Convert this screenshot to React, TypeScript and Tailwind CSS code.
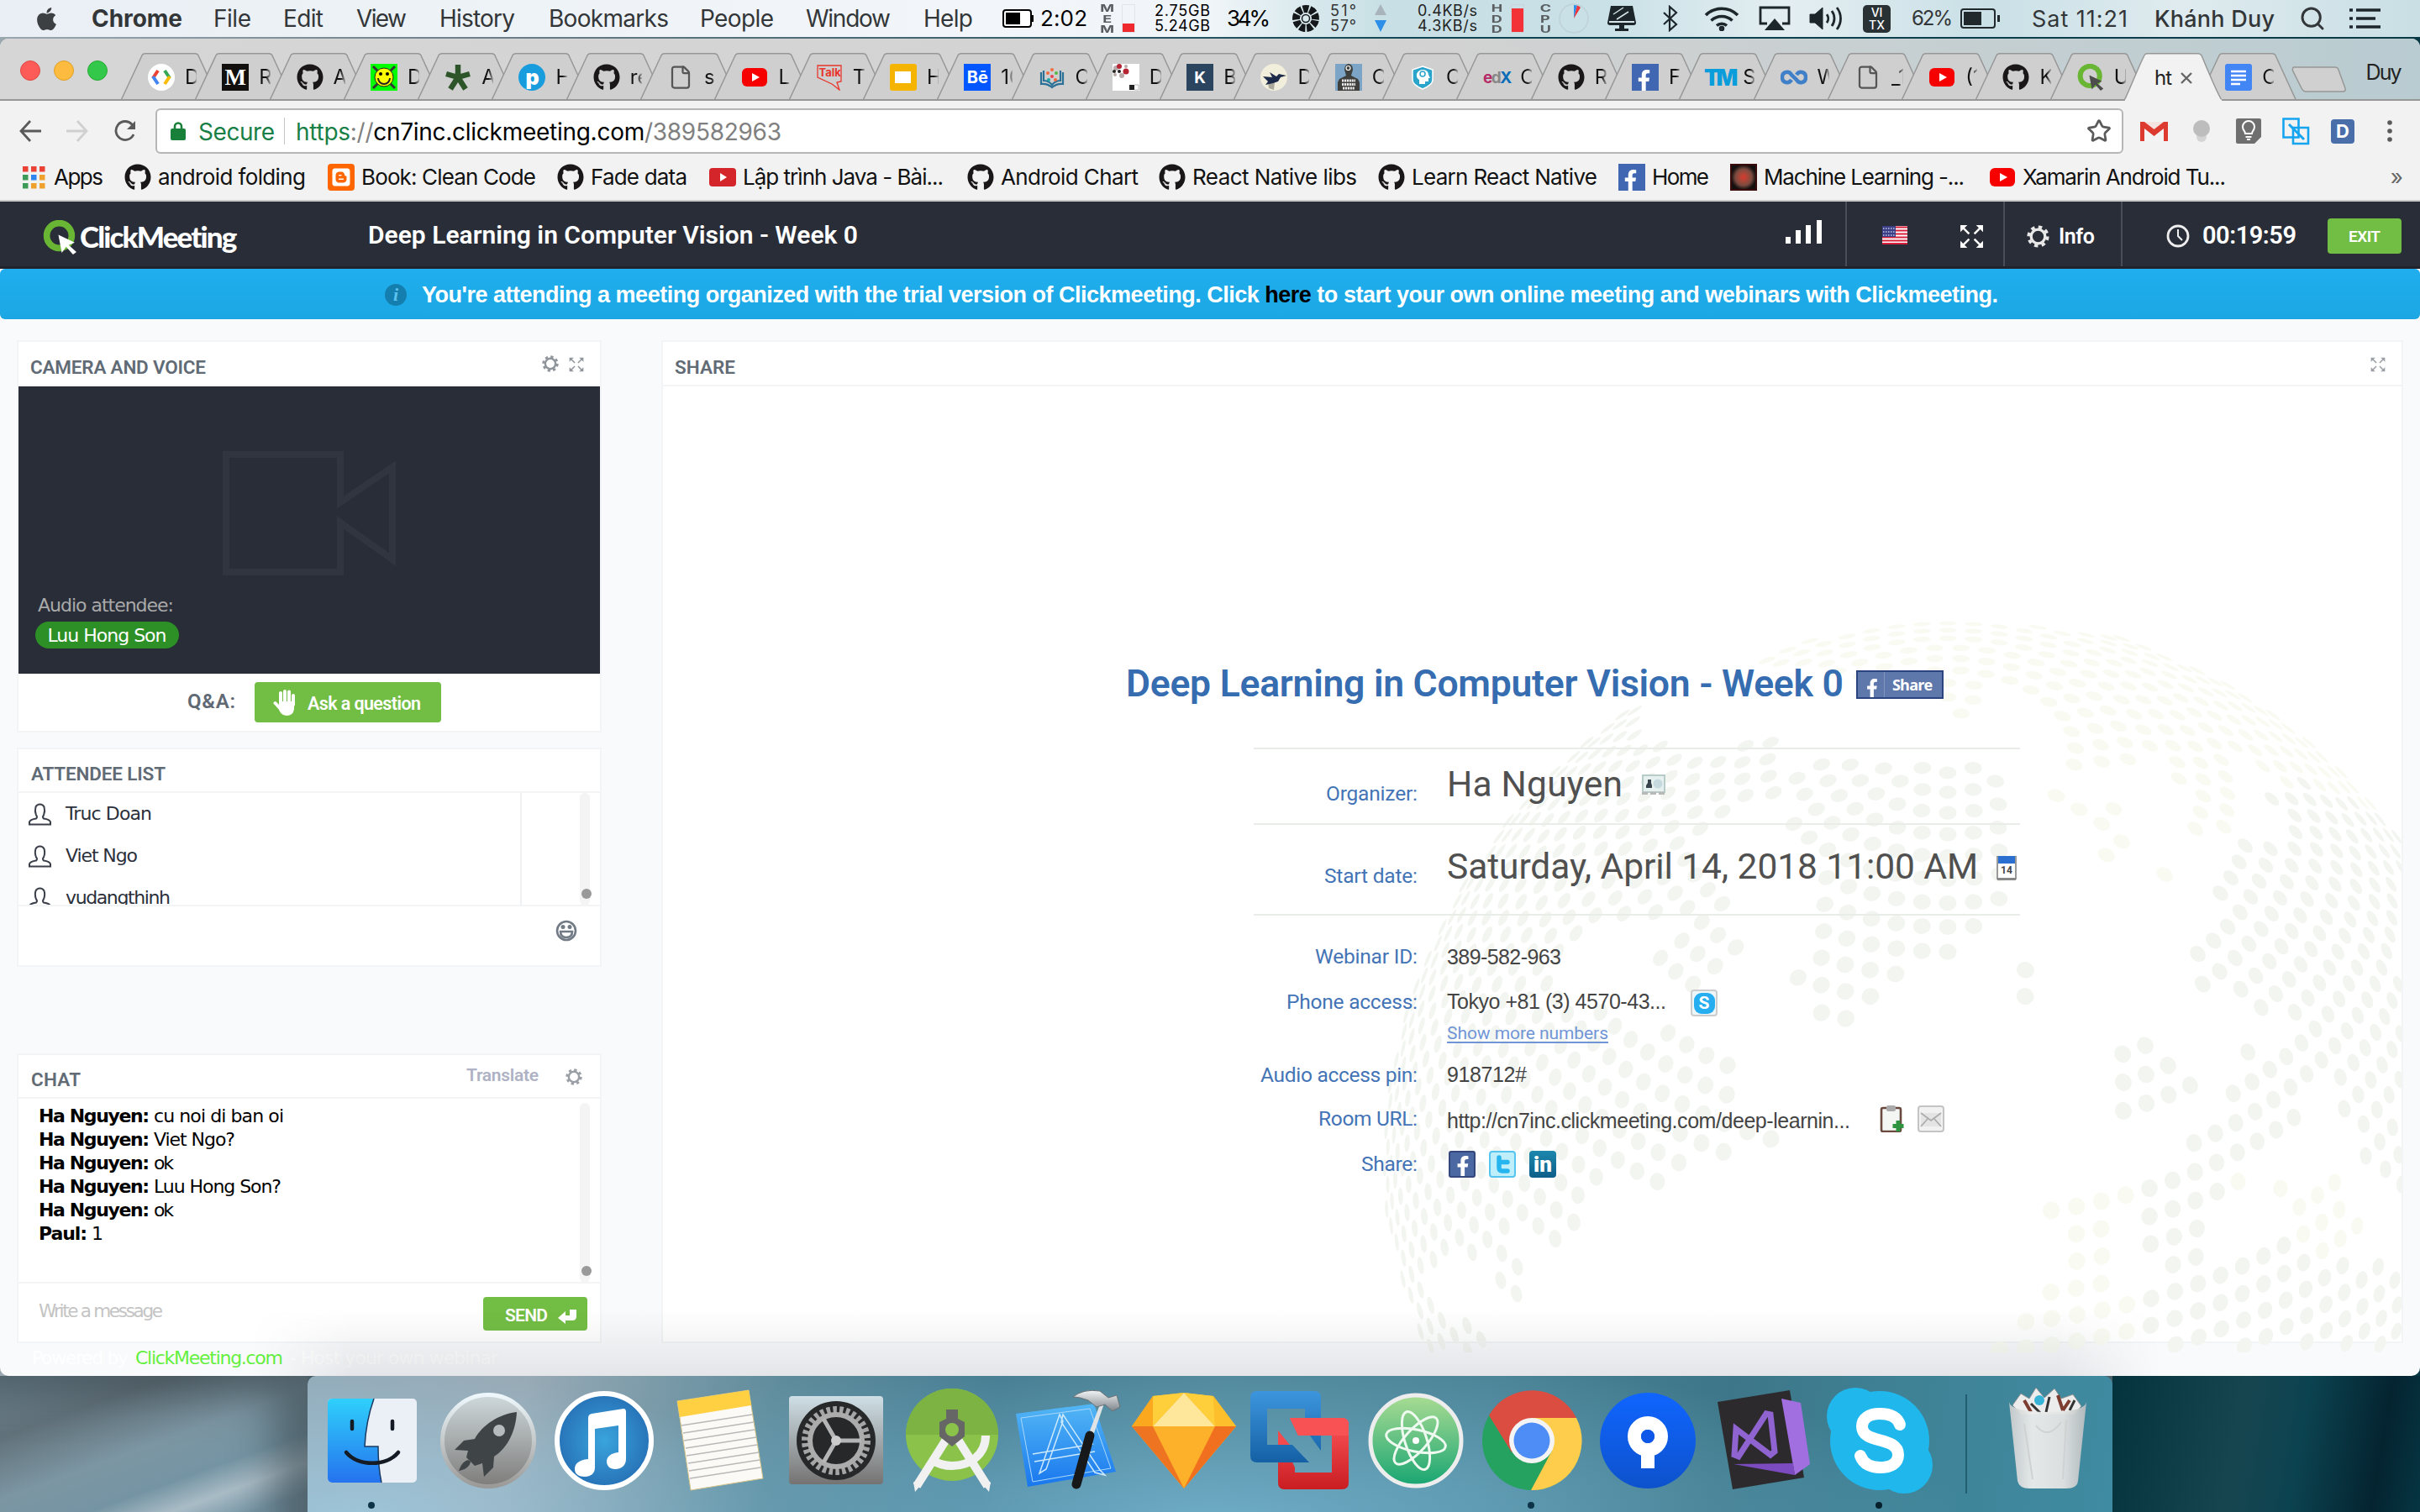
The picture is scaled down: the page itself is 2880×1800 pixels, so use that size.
import React, { useLayoutEffect, useRef, useState } from "react";
import { FaApple, FaGithub, FaFacebookF, FaBlogger } from "react-icons/fa";
import { Search, Star, File as FileIcon } from "lucide-react";

const UI = "font-['Inter',sans-serif]";
const ROBOTO = "font-['Roboto',sans-serif]";
const VERDANA = "font-['DejaVu_Sans',sans-serif]";
const ARIAL = "font-['Liberation_Sans',sans-serif]";

/* A single line of text that spreads its letters over the width of its box. */
function Fit({ className = "", children }: { className?: string; children: React.ReactNode }) {
  const box = useRef<HTMLSpanElement>(null);
  const line = useRef<HTMLSpanElement>(null);
  const [spacing, setSpacing] = useState(0);
  useLayoutEffect(() => {
    if (!box.current || !line.current) return;
    const n = Math.max(1, (line.current.textContent || "").length - 1);
    setSpacing((box.current.clientWidth - line.current.getBoundingClientRect().width) / n);
  }, []);
  return (
    <span ref={box} className={"block shrink-0 whitespace-nowrap " + className}>
      <span ref={line} style={{ letterSpacing: spacing }}>{children}</span>
    </span>
  );
}

/* ---------- menu bar ---------- */

const menus = [
  { t: "File", c: "ml-[37px] w-[45px]" },
  { t: "Edit", c: "ml-[38px] w-[48px]" },
  { t: "View", c: "ml-[39px] w-[60px]" },
  { t: "History", c: "ml-[39px] w-[90px]" },
  { t: "Bookmarks", c: "ml-[40px] w-[143px]" },
  { t: "People", c: "ml-[37px] w-[88px]" },
  { t: "Window", c: "ml-[38px] w-[101px]" },
  { t: "Help", c: "ml-[39px] w-[59px]" },
];

function Stack3({ letters, className }: { letters: string; className: string }) {
  return (
    <div className={"flex w-4 shrink-0 flex-col items-center gap-[1.500px] text-[12px] font-bold leading-[11px] text-[#5a5e61] " + className}>
      {letters.split("").map((l, i) => <span key={i} className="block h-[11px] scale-x-150 overflow-visible">{l}</span>)}
    </div>
  );
}

function MenuBar() {
  return (
    <header className={"flex h-11 items-center bg-[linear-gradient(90deg,#e9eff4_0%,#f2f6fa_40%,#f0f5f9_50%,#c8e0e5_57%,#c8e0e6_66%,#e4eef2_74%,#c9e0e6_82%,#dfebef_90%,#c9dfe4_100%)] text-[28px] leading-none text-[#333638] " + UI}>
      <FaApple className="ml-[40px] size-[31px] shrink-0 text-[#3d4043]" />
      <Fit className="ml-[38px] w-[108px] font-bold">Chrome</Fit>
      {menus.map((m) => <Fit key={m.t} className={m.c}>{m.t}</Fit>)}
      <div className="ml-[35px] h-[22px] w-[35px] shrink-0 rounded-[4px] border-2 border-black bg-white p-[2px]">
        <div className="h-full w-[17px] bg-black" />
      </div>
      <div className="h-2 w-[2px] shrink-0 bg-black" />
      <Fit className="ml-2 w-[56px] text-[26px] text-black">2:02</Fit>
      <Stack3 letters="MEM" className="ml-[16px]" />
      <div className="ml-[9px] flex h-[34px] w-4 shrink-0 items-end border border-[#dfe5ea]"><div className="h-[10px] w-full bg-[#ee2a2e]" /></div>
      <div className="ml-[23px] w-[66px] shrink-0 text-[18px] leading-[18px] text-black">
        <Fit className="w-[66px]">2.75GB</Fit><Fit className="w-[66px]">5.24GB</Fit>
      </div>
      <Fit className="ml-[20px] w-[52px] text-[26px] text-black">34%</Fit>
      <svg viewBox="0 0 34 34" className="ml-[25px] size-[34px] shrink-0">
        <circle cx="17" cy="17" r="11.500" fill="none" stroke="#15181a" strokeWidth="9" strokeDasharray="6.400 1.630" transform="rotate(12 17 17)" />
        <circle cx="17" cy="17" r="4.500" fill="none" stroke="#15181a" strokeWidth="1.500" />
      </svg>
      <div className="ml-3 w-[31px] shrink-0 text-[18px] leading-[18px] text-[#333]"><Fit className="w-[31px]">51°</Fit><Fit className="w-[31px]">57°</Fit></div>
      <svg viewBox="0 0 16 34" className="ml-[21px] h-[34px] w-4 shrink-0"><path d="M8 0l7 13H1z" fill="#a9b4ba" /><path d="M8 33L1 19h14z" fill="#2e8fe8" /></svg>
      <div className="ml-[36px] w-[71px] shrink-0 text-[18px] leading-[18px] text-[#222]"><Fit className="w-[71px]">0.4KB/s</Fit><Fit className="w-[71px]">4.3KB/s</Fit></div>
      <Stack3 letters="HDD" className="ml-[15px]" />
      <div className="ml-[9px] flex h-[34px] w-4 shrink-0 items-end border border-[#c9d5da]"><div className="h-[28px] w-full bg-[#f23236]" /></div>
      <Stack3 letters="CPU" className="ml-[17px]" />
      <svg viewBox="0 0 36 36" className="ml-[8px] size-9 shrink-0"><circle cx="18" cy="18" r="17" fill="none" stroke="#bfd2d8" strokeWidth="1.500" /><path d="M18 18V2a16 16 0 0 1 4 .6z" fill="#2e8fe8" /><path d="M18 18l4-15.500a14 14 0 0 1 4 2.500z" fill="#f23236" /></svg>
      <svg viewBox="0 0 36 30" className="ml-[21px] h-[30px] w-9 shrink-0" fill="#1c262b"><path d="M5 0h26l4 20a3 3 0 0 1-3 3H4a3 3 0 0 1-3-3z" /><path d="M15 23h6v4h5v3H10v-3h5z" /><path d="M3 19h30" stroke="#d5e5ea" strokeWidth="2" /><path d="M8 10l12-8M12 16L26 7" stroke="#d5e5ea" strokeWidth="1.500" /></svg>
      <svg viewBox="0 0 20 32" className="ml-[30px] h-8 w-5 shrink-0" fill="none" stroke="#1c262b" strokeWidth="2.200"><path d="M2 9l15 14-8 7V2l8 7L2 23" /></svg>
      <svg viewBox="0 0 42 30" className="ml-[30px] h-[30px] w-[42px] shrink-0" fill="none" stroke="#1c262b" strokeWidth="3.600"><path d="M2 11a27 27 0 0 1 38 0M8.500 17.500a18 18 0 0 1 25 0M15 23.500a9 9 0 0 1 12 0" /><circle cx="21" cy="27" r="1.500" /></svg>
      <svg viewBox="0 0 38 30" className="ml-[23px] h-[30px] w-[38px] shrink-0"><path d="M10 21H2V2h34v19h-8" fill="none" stroke="#1c262b" strokeWidth="2.800" /><path d="M19 15l12 14H7z" fill="#1c262b" /></svg>
      <svg viewBox="0 0 44 32" className="ml-[22px] h-8 w-11 shrink-0" fill="none" stroke="#1c262b" strokeWidth="2.800"><path d="M1 11h6l9-8v26l-9-8H1z" fill="#1c262b" strokeWidth="1" /><path d="M21 11a8 8 0 0 1 0 10M27 7a15 15 0 0 1 0 18M33 3a21 21 0 0 1 0 26" /></svg>
      <div className="ml-[20px] flex h-[33px] w-[33px] shrink-0 flex-col items-center justify-center rounded-[5px] bg-[#2a3135] text-[14px] font-medium leading-[15px] text-white"><span>VI</span><span>TX</span></div>
      <Fit className="ml-[25px] w-[49px] text-[24px]">62%</Fit>
      <div className="ml-[9px] h-[24px] w-[42px] shrink-0 rounded-[4px] border-[2.500px] border-[#22292d] p-[2px]"><div className="h-full w-[21px] bg-[#22292d]" /></div>
      <div className="ml-[2px] h-2 w-[3px] shrink-0 bg-[#22292d]" />
      <Fit className="ml-[38px] w-[114px] text-[27px]">Sat 11:21</Fit>
      <Fit className="ml-[32px] w-[143px] text-[27px] font-medium">Khánh Duy</Fit>
      <Search className="ml-[29px] size-[32px] shrink-0" strokeWidth={2.2} />
      <svg viewBox="0 0 38 24" className="ml-[28px] h-6 w-[38px] shrink-0" stroke="#1c262b" strokeWidth="3.500"><path d="M0 2h4M8 2h29M0 12h4M8 12h23M0 22h4M8 22h29" /></svg>
    </header>
  );
}

/* ---------- favicons ---------- */

function YouTube({ className = "size-8" }: { className?: string }) {
  return <svg viewBox="0 0 32 32" className={className}><rect x="1" y="5" width="30" height="22" rx="6" fill="#f70000" /><path d="M13 11l9 5-9 5z" fill="#fff" /></svg>;
}
function Facebook() {
  return <div className="flex size-8 items-end justify-end bg-[#4267b2] pr-[5px]"><FaFacebookF className="size-[25px] text-white" /></div>;
}
function Letter({ children, className }: { children: React.ReactNode; className: string }) {
  return <div className={"flex size-8 items-center justify-center leading-none " + className}>{children}</div>;
}
function QLogo({ className = "size-8", pointer = "#4d4d4d" }: { className?: string; pointer?: string }) {
  return <svg viewBox="0 0 40 40" className={className}><circle cx="19" cy="18" r="14.500" fill="none" stroke="#69b534" strokeWidth="7.500" /><path d="M18 17l19 9-7 3 9 8-4 3-8-9-5 7z" fill={pointer} /></svg>;
}

const icons: Record<string, React.ReactNode> = {
  dev: <svg viewBox="0 0 32 32" className="size-8"><circle cx="16" cy="16" r="16" fill="#fff" /><g fill="none" strokeWidth="4"><path d="M12 8l-6 9" stroke="#ea4335" /><path d="M6 15l6 9" stroke="#4285f4" /><path d="M20 8l6 9" stroke="#34a853" /><path d="M26 15l-6 9" stroke="#fbbc05" /></g></svg>,
  medium: <Letter className="bg-[#12100e] font-['Liberation_Serif',serif] text-[27px] font-bold text-white">M</Letter>,
  gh: <FaGithub className="size-8 text-[#191717]" />,
  smile: <svg viewBox="0 0 32 32" className="size-8"><rect width="32" height="32" fill="#0f0" /><path d="M3 3l26 26M29 3L3 29" stroke="#333" strokeWidth="3" /><circle cx="16" cy="16" r="11" fill="#ff0" stroke="#222" /><path d="M9 17a7 7 0 0 0 14 0" fill="none" stroke="#222" strokeWidth="2" /><circle cx="12" cy="12" r="2" /><circle cx="20" cy="12" r="2" /></svg>,
  star: <svg viewBox="0 0 32 32" className="size-8" stroke="#2e5529" strokeWidth="6.500"><path d="M16 16V1M16 16L2 12M16 16l14-4M16 16L7 30M16 16l9 14" /></svg>,
  p: <Letter className="rounded-full bg-[#179cde] text-[25px] font-black text-white">p</Letter>,
  file: <FileIcon className="size-[30px] text-[#555]" strokeWidth={1.8} />,
  yt: <YouTube />,
  talk: <svg viewBox="0 0 32 32" className="size-8"><path d="M2 2h28v19l-5 1 3 9-9-7L2 16z" fill="none" stroke="#e8362d" strokeWidth="1.300" /><text x="3.500" y="15" fontSize="13" fontWeight="700" fill="#e8362d">Talk</text></svg>,
  slides: <div className="flex size-8 items-center justify-center rounded-[3px] bg-[#f5b400]"><div className="h-[14px] w-[19px] bg-white" /></div>,
  be: <Letter className="bg-[#0057ff] text-[20px] font-bold text-white">Bē</Letter>,
  book: <svg viewBox="0 0 32 32" className="size-8"><path d="M3 10v14q7-1 13 4 6-5 13-4V10M6 8v12q6 0 10 5 4-5 10-5V8" fill="none" stroke="#2a7097" strokeWidth="2.200" /><g fill="#f36c3d"><circle cx="16" cy="7" r="2" /><circle cx="11" cy="11" r="2" /><circle cx="21" cy="11" r="2" fill="#55b848" /><circle cx="16" cy="15" r="2" fill="#e7415a" /><circle cx="12" cy="19" r="2" fill="#1ca6a8" /><circle cx="20" cy="19" r="2" /></g></svg>,
  pix: <svg viewBox="0 0 32 32" className="size-8"><rect width="32" height="32" fill="#fff" /><g fill="#b9a9a9"><circle cx="4" cy="5" r="3" /><circle cx="11" cy="14" r="3" /><circle cx="3" cy="13" r="2" /><circle cx="16" cy="3" r="2" /></g><g fill="#b52433"><circle cx="8" cy="3" r="3" /><circle cx="16" cy="9" r="3.500" /></g><g fill="#222"><circle cx="2" cy="9" r="2" /><circle cx="8" cy="9" r="2" /><rect x="20" y="25" width="6" height="6" /></g><path d="M26 25h5v6h-5" fill="none" stroke="#bbb" /></svg>,
  k: <Letter className="bg-[#2b4560] text-[19px] font-bold text-white">K</Letter>,
  bird: <svg viewBox="0 0 32 32" className="size-8"><circle cx="16" cy="16" r="16" fill="#f1efdc" /><path d="M9 22h8l-1 9-6-2z" fill="#aaa99c" /><path d="M3 15l11 1-3-6 8 5 3-3 9 2-7 2-3 5-6 2-9 2 3-4z" fill="#1e2a4a" /></svg>,
  head: <svg viewBox="0 0 32 32" className="size-8"><rect width="32" height="32" fill="#7ba4c6" /><path d="M11 7q0-6 5-7 5 1 5 7l-2 7 8 4 2 4v10H3V22l2-4 8-4z" fill="#3f403e" /><circle cx="15.500" cy="5" r="2.500" fill="none" stroke="#fff" strokeWidth="1.200" /><path d="M8 20h16M8 24.500h16M9 29h14" stroke="#e8e8e8" strokeWidth="3" strokeDasharray="2.200 .7" /></svg>,
  shield: <svg viewBox="0 0 32 32" className="size-8"><path d="M16 3l12 4v12q0 6-12 11Q4 25 4 19V7z" fill="#2aa4cb" stroke="#fff" strokeWidth="1.500" /><path d="M12 24v-5q-4-2-3-7 2-5 8-5 6 1 6 6l2 4h-2v4h-4v3z" fill="#fff" /><circle cx="16" cy="12" r="3" fill="none" stroke="#2aa4cb" strokeWidth="1.500" /></svg>,
  edx: <div className="flex size-8 items-center justify-center text-[19px] font-bold leading-none tracking-[-1.500px]"><span className="text-[#b52a67]">e</span><span className="text-[#888]">d</span><span className="text-[#0b6db7]">X</span></div>,
  fb: <Facebook />,
  tm: <Letter className="text-[27px] font-black tracking-[-4px] text-[#0a9ddb]">TM</Letter>,
  coursera: <svg viewBox="0 0 32 32" className="size-8"><path d="M13 19c-3 5-11 4-11-3s8-8 11-3l6 6c3 5 11 4 11-3s-8-8-11-3" fill="none" stroke="#3f80c8" strokeWidth="4.500" /></svg>,
  q: <QLogo />,
  docs: <svg viewBox="0 0 32 32" className="size-8"><rect width="32" height="32" rx="3" fill="#4285f4" /><path d="M7 9h18M7 14h18M7 19h18M7 24h11" stroke="#fff" strokeWidth="2.500" /></svg>,
  blogger: <Letter className="rounded-[4px] bg-[#ff6600]"><FaBlogger className="size-[24px] text-white" /></Letter>,
  ml: <div className="size-8 border-2 border-[#3a0a0a] bg-radial from-[#d8382c] via-[#7a4a3f] to-[#151010] to-75%" />,
  apps: <svg viewBox="0 0 27 27" className="size-[27px]">{["#ea4335", "#ea4335", "#ea4335", "#3c9b58", "#2f86ee", "#eea12c", "#3c9b58", "#eea12c", "#eea12c"].map((f, i) => <rect key={i} x={(i % 3) * 10} y={Math.floor(i / 3) * 10} width="6.500" height="6.500" fill={f} />)}</svg>,
  yt2: <svg viewBox="0 0 32 32" className="size-8"><rect y="5" width="32" height="22" rx="4" fill="#d4252a" /><path d="M13 11l8 5-8 5z" fill="#fff" /></svg>,
};

/* ---------- browser chrome ---------- */

const tabs: [string, string][] = [
  ["dev", "D"], ["medium", "R"], ["gh", "A"], ["smile", "D"], ["star", "A"], ["p", "H"], ["gh", "re"], ["file", "s"],
  ["yt", "L"], ["talk", "T"], ["slides", "H"], ["be", "10"], ["book", "C"], ["pix", "D"], ["k", "B"], ["bird", "D"],
  ["head", "C"], ["shield", "C"], ["edx", "C"], ["gh", "R"], ["fb", "F"], ["tm", "S"], ["coursera", "W"], ["file", "_1"],
  ["yt", "(1"], ["gh", "K"], ["q", "U"], ["", "ht"], ["docs", "C"],
];

function TabStrip() {
  return (
    <div className="flex h-[74px] items-end bg-linear-to-r from-[#d6d6d6] via-[#d2d2d2] via-60% to-[#b9ccd1] shadow-[inset_0_-2px_0_#979797]">
      <div className="mb-[24px] ml-6 flex w-[120px] shrink-0 gap-4">
        <span className="size-6 rounded-full border border-[#e2463f] bg-[#fc5b57]" />
        <span className="size-6 rounded-full border border-[#dfa023] bg-[#fdbc40]" />
        <span className="size-6 rounded-full border border-[#27aa35] bg-[#34c84a]" />
      </div>
      {tabs.map(([icon, title], i) => {
        const active = icon === "";
        return (
          <div key={i} className={"relative h-[57px] w-[88.300px] shrink-0 " + (active ? "z-10" : "")}>
            <svg viewBox="0 0 117 57" className="absolute left-0 top-0 h-[57px] w-[117px]">
              <path d={active ? "M0 56.500C4 50 22 4 25 1.500Q26 .8 28 .8H88Q90.500 .8 92 3C96 12 112 52 116.500 56.500" : "M0 56.500L25 3Q26 .8 29 .8H88Q91 .8 92 3L116.500 56.500"} fill={active ? "#f2f2f2" : "#cfcfcf"} stroke="#979797" strokeWidth="1.500" />
              <path d={active ? "M1 56.500h115" : "M0 56h117"} stroke={active ? "#f2f2f2" : "#979797"} strokeWidth="2" />
            </svg>
            {active ? (
              <div className={"absolute left-[36px] top-[14px] flex items-center text-[24px] leading-8 text-[#222] " + UI}>
                <span className="w-[23px] whitespace-nowrap tracking-[-1px]">ht</span>
                <svg viewBox="0 0 14 14" className="ml-[8px] size-[14px]" stroke="#666" strokeWidth="2.400"><path d="M1 1l12 12M13 1L1 13" /></svg>
              </div>
            ) : (
              <div className={"absolute left-[32px] top-[13px] flex h-8 items-center text-[24px] leading-8 text-[#111] " + UI}>
                <span className="flex size-8 shrink-0 items-center justify-center">{icons[icon]}</span>
                <span className="ml-[12px] w-[14px] overflow-hidden whitespace-nowrap [mask-image:linear-gradient(to_right,black_60%,transparent_110%)]">{title}</span>
              </div>
            )}
          </div>
        );
      })}
      <svg viewBox="0 0 66 32" className="mb-[9px] ml-[22px] h-8 w-[66px] shrink-0"><path d="M3 1h49q3 0 4 3l8 22q1 4-3 4H17q-3 0-5-4L1.500 5Q1 1 3 1z" fill="#d0d0d0" stroke="#979797" strokeWidth="1.500" /></svg>
      <Fit className={"mb-[20px] ml-[23px] w-[43px] text-[25px] leading-7 text-[#222] " + UI}>Duy</Fit>
    </div>
  );
}

function Toolbar() {
  return (
    <div className={"flex h-[72px] items-center bg-[#f2f2f2] text-[28px] leading-none " + UI}>
      <svg viewBox="0 0 26 26" className="ml-[23px] size-[26px] shrink-0" fill="none" stroke="#5a5a5a" strokeWidth="2.800"><path d="M26 13H2M13 1L2 13l11 12" /></svg>
      <svg viewBox="0 0 26 26" className="ml-[30px] size-[26px] shrink-0" fill="none" stroke="#d0d0d0" strokeWidth="2.800"><path d="M0 13h24M13 1l11 12-11 12" /></svg>
      <svg viewBox="0 0 26 26" className="ml-[31px] size-[26px] shrink-0" fill="none" stroke="#5a5a5a" strokeWidth="2.800"><path d="M23 17a11 11 0 1 1-2-12l3 4" /><path d="M25 1v10H15z" fill="#5a5a5a" stroke="none" /></svg>
      <div className="ml-[23px] flex h-[54px] w-[2342px] shrink-0 items-center rounded-[6px] border-2 border-[#b6b6b6] bg-white">
        <svg viewBox="0 0 18 22" className="ml-4 h-[22px] w-[18px] shrink-0"><path d="M5 9V5.500a4 4 0 0 1 8 0V9" fill="none" stroke="#188038" strokeWidth="2.600" /><rect y="8" width="18" height="14" rx="2" fill="#188038" /></svg>
        <Fit className="ml-[15px] mt-px w-[91px] text-[#188046]">Secure</Fit>
        <div className="ml-[11px] h-8 w-px bg-[#c4c4c4]" />
        <Fit className="ml-[13px] mt-px w-[578px] text-black"><span className="text-[#188046]">https</span><span className="text-[#808080]">://</span>cn7inc.clickmeeting.com<span className="text-[#808080]">/389582963</span></Fit>
        <Star className="ml-auto mr-[12px] size-[30px] text-[#5a5a5a]" strokeWidth={2.2} />
      </div>
      <svg viewBox="0 0 33 24" className="ml-[20px] h-6 w-[33px] shrink-0"><rect width="33" height="24" rx="2" fill="#f4f4f4" /><path d="M0 24V2l16.500 13L33 2v22h-5V9L16.500 18 5 9v15z" fill="#dd3a30" /><path d="M0 1h33v3L16.500 16 0 4z" fill="#dd3a30" /><path d="M5 1h23L16.500 10z" fill="#f3e4e2" /></svg>
      <svg viewBox="0 0 22 26" className="ml-[29px] h-[26px] w-[22px] shrink-0"><circle cx="11" cy="20" r="6" fill="#d4d4d4" /><circle cx="11" cy="10" r="10" fill="#bdbdbd" /></svg>
      <svg viewBox="0 0 32 32" className="ml-[29px] size-8 shrink-0"><path d="M3 1h26a2 2 0 0 1 2 2v20l-8 8H3a2 2 0 0 1-2-2V3a2 2 0 0 1 2-2z" fill="#6f6f6f" /><path d="M12 19c0-3-3-4-3-8a7 7 0 0 1 14 0c0 4-3 5-3 8zM12.500 23h7M14 26h4" fill="none" stroke="#fff" strokeWidth="2" /></svg>
      <svg viewBox="0 0 33 33" className="ml-[24px] size-[33px] shrink-0" fill="none" stroke="#15a4f0" strokeWidth="2.600"><path d="M1.500 1.500h18v22h-18zM13 12h18v19H13z" fill="#f2f2f2" /><path d="M8 8l18 18" strokeWidth="3" /></svg>
      <div className="ml-[25px] flex h-[29px] w-[28px] shrink-0 items-center justify-center rounded-[4px] bg-[#4a6ea9] text-[22px] font-bold text-white">D</div>
      <svg viewBox="0 0 6 26" className="ml-[39px] h-[26px] w-[6px] shrink-0" fill="#5a5a5a"><circle cx="3" cy="3" r="2.800" /><circle cx="3" cy="13" r="2.800" /><circle cx="3" cy="23" r="2.800" /></svg>
    </div>
  );
}

const bookmarks = [
  { i: "apps", t: "Apps", m: "ml-[27px]", w: "ml-[10px] w-[59px]" },
  { i: "gh", t: "android folding", m: "ml-[25px]", w: "ml-2 w-[176px]" },
  { i: "blogger", t: "Book: Clean Code", m: "ml-[26px]", w: "ml-2 w-[208px]" },
  { i: "gh", t: "Fade data", m: "ml-[25px]", w: "ml-2 w-[115px]" },
  { i: "yt2", t: "Lập trình Java - Bài...", m: "ml-[26px]", w: "ml-2 w-[239px]" },
  { i: "gh", t: "Android Chart", m: "ml-[28px]", w: "ml-2 w-[164px]" },
  { i: "gh", t: "React Native libs", m: "ml-[24px]", w: "ml-2 w-[196px]" },
  { i: "gh", t: "Learn React Native", m: "ml-[25px]", w: "ml-2 w-[221px]" },
  { i: "fb", t: "Home", m: "ml-[25px]", w: "ml-2 w-[68px]" },
  { i: "ml", t: "Machine Learning -...", m: "ml-[25px]", w: "ml-2 w-[239px]" },
  { i: "yt", t: "Xamarin Android Tu...", m: "ml-[29px]", w: "ml-2 w-[242px]" },
];

function BookmarksBar() {
  return (
    <div className={"flex h-12 items-center border-b-2 border-[#c8c8c8] bg-[#f2f2f2] pb-[8px] text-[26px] leading-8 text-[#111] " + UI}>
      {bookmarks.map((b) => (
        <div key={b.t} className={"flex shrink-0 items-center " + b.m}>
          {icons[b.i]}
          <Fit className={b.w}>{b.t}</Fit>
        </div>
      ))}
      <span className="ml-auto mr-[20px] text-[26px] text-[#666]">»</span>
    </div>
  );
}

/* ---------- meeting room ---------- */

function Gear({ className }: { className: string }) {
  return (
    <svg viewBox="0 0 26 26" className={className} fill="none" stroke="currentColor">
      <circle cx="13" cy="13" r="8" strokeWidth="3.200" />
      <circle cx="13" cy="13" r="10.800" strokeWidth="3.600" strokeDasharray="4.240 4.240" />
    </svg>
  );
}
function Expand({ className }: { className: string }) {
  return (
    <svg viewBox="0 0 28 28" className={className} fill="currentColor" stroke="currentColor" strokeWidth="2.400">
      <path d="M1 1h8L1 9zM27 1v8l-8-8zM1 27v-8l8 8zM27 27h-8l8-8z" stroke="none" />
      <path d="M4 4l7 7M24 4l-7 7M4 24l7-7M24 24l-7-7" />
    </svg>
  );
}

function RoomHeader() {
  return (
    <div className={"flex h-20 items-center border-b-[3px] border-[#20232c] bg-[#292d38] text-white " + ROBOTO}>
      <QLogo className="ml-[51px] mt-2 size-[41px] shrink-0" pointer="#fff" />
      <Fit className="ml-[3px] mt-[5px] w-[188px] font-['Lato',sans-serif] text-[35px] font-black leading-10">ClickMeeting</Fit>
      <Fit className="ml-[155px] mt-[3px] w-[583px] text-[30px] font-semibold leading-9">Deep Learning in Computer Vision - Week 0</Fit>
      <svg viewBox="0 0 44 28" className="ml-[1104px] mt-[-5px] h-7 w-11 shrink-0" fill="#fff"><rect y="20" width="6" height="8" /><rect x="12" y="12" width="6" height="16" /><rect x="24" y="6" width="6" height="22" /><rect x="37" width="6" height="28" /></svg>
      <div className="ml-[27px] h-full w-[2px] bg-[#4a4e58]" />
      <svg viewBox="0 0 30 24" className="ml-[42px] mt-1 h-6 w-[30px] shrink-0">
        <rect width="30" height="22" fill="#fff" />
        <path d="M0 1.500h30M0 5.500h30M0 9.500h30M0 13.500h30M0 17.500h30M0 21h30" stroke="#d8203c" strokeWidth="2" />
        <rect width="16" height="13" fill="#3a3f86" /><path d="M1 3h14M1 7h14M1 11h14" stroke="#c6c9ea" strokeWidth="1.300" strokeDasharray="1.500 1.500" />
      </svg>
      <Expand className="ml-[62px] mt-[6px] size-[29px] shrink-0" />
      <div className="ml-[23px] h-full w-[2px] bg-[#4a4e58]" />
      <Gear className="ml-[26px] mt-[5px] size-[27px] shrink-0 text-[#e8e8e8]" />
      <Fit className="ml-[11px] mt-[7px] w-[43px] text-[25px] font-semibold leading-8">Info</Fit>
      <div className="ml-[31px] h-full w-[2px] bg-[#4a4e58]" />
      <svg viewBox="0 0 28 28" className="ml-[52px] mt-[5px] size-7 shrink-0" fill="none" stroke="#eee" strokeWidth="2.800"><circle cx="14" cy="14" r="12" /><path d="M14 6v8l5 5" strokeWidth="2" /></svg>
      <Fit className="ml-[15px] mt-[3px] w-[112px] text-[29px] font-semibold leading-9">00:19:59</Fit>
      <div className="ml-[37px] mt-[5px] flex h-[42px] w-[88px] shrink-0 items-center justify-center rounded-[4px] bg-[#72bd43]"><Fit className="w-[38px] text-[19px] font-semibold leading-none">EXIT</Fit></div>
    </div>
  );
}

function TrialBanner() {
  return (
    <div className={"flex h-[60px] items-center rounded-[6px] bg-linear-to-b from-[#20aeee] to-[#1ca7e4] text-[27px] font-bold leading-8 text-white " + ARIAL}>
      <div className="ml-[458px] mt-[2px] flex size-[26px] items-center justify-center rounded-full bg-[#147fae] font-['Liberation_Serif',serif] text-[22px] italic leading-none text-[#5cc3ef]">i</div>
      <Fit className="ml-[18px] mt-[2px] w-[1876px]">You're attending a meeting organized with the trial version of Clickmeeting. Click <span className="text-black">here</span> to start your own online meeting and webinars with Clickmeeting.</Fit>
    </div>
  );
}

function Panel({ className, children }: { className: string; children: React.ReactNode }) {
  return <section className={"border-2 border-[#f2f4f5] bg-white " + className}>{children}</section>;
}

function CameraPanel() {
  return (
    <Panel className="h-[467px]">
      <div className="flex h-[53px] items-center border-b-2 border-[#f2f4f5] pl-[14px]">
        <Fit className={"mt-[9px] w-[209px] text-[22.500px] font-semibold leading-7 text-[#616b75] " + ROBOTO}>CAMERA AND VOICE</Fit>
        <Gear className="ml-[400px] size-[20px] text-[#8f959b]" />
        <Expand className="ml-[12px] mt-[3px] size-[18px] text-[#8f959b]" />
      </div>
      <div className={"flex h-[342px] flex-col bg-[#292d38] text-[22px] leading-[26px] " + VERDANA}>
        <svg viewBox="0 0 206 148" className="ml-[243px] mt-[77px] h-[148px] w-[206px]" fill="none" stroke="#31353f" strokeWidth="8"><path d="M140 61V4H4v140h136V85l62 44V19z" /></svg>
        <Fit className="ml-[23px] mt-[23px] w-[162px] text-[#a9a9a9]">Audio attendee:</Fit>
        <div className="ml-[20px] mt-[6px] flex h-8 w-[171px] items-center justify-center rounded-full bg-[#2d9027]"><Fit className="mt-px w-[142px] text-white">Luu Hong Son</Fit></div>
      </div>
      <div className={"flex h-[66px] items-center pl-[201px] font-semibold " + ROBOTO}>
        <Fit className="w-[57px] text-[24px] leading-7 text-[#5f6973]">Q&amp;A:</Fit>
        <div className="ml-[23px] mt-[2px] flex h-12 w-[222px] items-center rounded-[4px] bg-[#72bd43]">
          <svg viewBox="0 0 28 33" className="ml-[22px] h-[33px] w-7" stroke="#fff" strokeWidth="4" strokeLinecap="round" fill="none"><path d="M9 18V5M14 17V3M19 17V3.500M24 19V8M9 24L2.500 17" /><path d="M9 16h15v8q-1 7-8 7t-9-10z" fill="#fff" strokeWidth="2" /></svg>
          <Fit className="ml-[13px] mt-[4px] w-[135px] text-[21.500px] leading-7 text-white">Ask a question</Fit>
        </div>
      </div>
    </Panel>
  );
}

const attendees = [
  { n: "Truc Doan", w: "w-[103px]" },
  { n: "Viet Ngo", w: "w-[86px]" },
  { n: "vudangthinh", w: "w-[125px]" },
];

function ScrollTrack({ className }: { className: string }) {
  return <div className={"relative w-3 rounded-full bg-[#f4f4f4] " + className}><span className="absolute bottom-2 left-[2px] size-3 rounded-full bg-[#999]" /></div>;
}

function AttendeePanel() {
  return (
    <Panel className="mt-[18px] h-[261px]">
      <div className="h-[52px] border-b-2 border-[#f2f4f5] pl-[15px] pt-[15px]">
        <Fit className={"w-[160px] text-[22.500px] font-semibold leading-7 text-[#616b75] " + ROBOTO}>ATTENDEE LIST</Fit>
      </div>
      <div className="flex h-[135px] overflow-hidden border-b-2 border-[#f2f4f5]">
        <div className={"w-[599px] border-r-2 border-[#f0f1f2] text-[22px] leading-[50px] text-[#2b303b] " + VERDANA}>
          {attendees.map((a) => (
            <div key={a.n} className="flex h-[50px] items-center">
              <svg viewBox="0 0 27 26" className="ml-[12px] size-[27px]" fill="none" stroke="#3a3f49" strokeWidth="2"><path d="M1 25v-3q1-3 8-4 2-2 0-4Q7 9 8.500 4 10 1 13.500 1T18.500 4Q20 9 18 14q-2 2 0 4 7 1 8 4v3z" /></svg>
              <Fit className={"ml-[17px] " + a.w}>{a.n}</Fit>
            </div>
          ))}
        </div>
        <ScrollTrack className="ml-[69px] h-[134px]" />
      </div>
      <svg viewBox="0 0 26 26" className="ml-[639px] mt-[16px] size-[26px]" fill="none" stroke="#727b85" strokeWidth="2.600"><circle cx="13" cy="13" r="11" /><circle cx="9" cy="8.500" r="1.200" fill="#727b85" /><circle cx="17" cy="8.500" r="1.200" fill="#727b85" /><path d="M6 14h14q0 7-7 7t-7-7z" /></svg>
    </Panel>
  );
}

const messages = [
  { who: "Ha Nguyen:", text: "cu noi di ban oi", w: "w-[155px]" },
  { who: "Ha Nguyen:", text: "Viet Ngo?", w: "w-[97px]" },
  { who: "Ha Nguyen:", text: "ok", w: "w-[24px]" },
  { who: "Ha Nguyen:", text: "Luu Hong Son?", w: "w-[152px]" },
  { who: "Ha Nguyen:", text: "ok", w: "w-[24px]" },
  { who: "Paul:", text: "1", w: "w-[14px]" },
];

function ChatPanel() {
  return (
    <Panel className="mt-[103px] h-[345px]">
      <div className={"flex h-[52px] items-center border-b-2 border-[#f2f4f5] pl-[15px] font-semibold leading-7 " + ROBOTO}>
        <Fit className="mt-[8px] w-[59px] text-[22.500px] text-[#616b75]">CHAT</Fit>
        <Fit className="ml-[459px] mt-[-2px] w-[86px] text-[21px] text-[#aeb2c4]">Translate</Fit>
        <Gear className="ml-[32px] mt-[1px] size-[20px] text-[#9a9fa5]" />
      </div>
      <div className={"flex h-[220px] border-b-2 border-[#f2f4f5] text-[22px] leading-7 text-black " + VERDANA}>
        <div className="w-[668px] pl-[24px] pt-[7px]">
          {messages.map((m, i) => (
            <div key={i} className="flex h-7">
              <Fit className={"mr-[5px] font-bold " + (m.who === "Paul:" ? "w-[58px]" : "w-[132px]")}>{m.who}</Fit>
              <Fit className={m.w}>{m.text}</Fit>
            </div>
          ))}
        </div>
        <ScrollTrack className="mt-[5px] h-[214px]" />
      </div>
      <div className="flex h-[68px] items-center">
        <Fit className={"ml-[24px] mt-[-3px] w-[148px] text-[21.500px] leading-7 text-[#c4c4c4] " + VERDANA}>Write a message</Fit>
        <div className={"ml-[381px] mt-[4px] flex h-10 w-[124px] items-center rounded-[4px] bg-[#72bd43] font-semibold text-white " + ROBOTO}>
          <Fit className="ml-[26px] mt-[3px] w-[51px] text-[21px] leading-7">SEND</Fit>
          <svg viewBox="0 0 22 17" className="ml-3 mt-[6px] h-[17px] w-[22px]" fill="#fff"><path d="M0 10l9-8v5h5V0h8v8q0 5-5 5H9v4z" /></svg>
        </div>
      </div>
    </Panel>
  );
}

/* Dotted globe: dots sit on tilted parallels and are kept where they fall on land. */
const greyLand: number[][][] = [
  [[40, 1000], [80, 830], [130, 640], [190, 500], [280, 370], [420, 210], [440, 300], [475, 280], [500, 350], [560, 320], [630, 300], [670, 380], [590, 440], [550, 490], [500, 540], [580, 600], [550, 640], [410, 660], [330, 700], [310, 800], [400, 850], [540, 880], [580, 950], [570, 1030], [640, 1110], [500, 1140], [460, 1180], [380, 1190], [340, 1270], [290, 1310], [250, 1290], [265, 1420], [235, 1420], [220, 1310], [170, 1330], [120, 1350], [150, 1450], [210, 1470], [200, 1514], [120, 1514], [70, 1300]],
  [[440, 720], [510, 645], [615, 690], [560, 790], [460, 790]],
  [[650, 460], [700, 340], [830, 335], [985, 370], [970, 500], [965, 620], [930, 700], [840, 750], [780, 820], [730, 870], [670, 860], [655, 760], [690, 640], [680, 500]],
  [[975, 750], [1050, 750], [1020, 830], [980, 830]],
  [[1270, 530], [1390, 480], [1330, 400], [1400, 380], [1480, 430], [1545, 480], [1545, 1220], [1480, 1130], [1430, 900], [1400, 850], [1330, 870], [1300, 800], [1220, 810], [1260, 660]],
  [[1300, 900], [1440, 900], [1400, 1050], [1300, 1170], [1260, 1300], [1215, 1420], [1150, 1310], [1140, 1240], [1220, 1130], [1250, 1050], [1300, 1000]],
  [[1105, 960], [1150, 890], [1200, 900], [1255, 990], [1170, 1070], [1110, 1030]],
  [[1150, 1514], [1160, 1420], [1250, 1350], [1370, 1300], [1545, 1360], [1545, 1514]],
];
const greenLand: number[][][] = [
  [[600, 140], [700, 95], [870, 60], [1120, 90], [1200, 100], [1300, 170], [1400, 260], [1500, 390], [1545, 440], [1500, 470], [1380, 400], [1310, 320], [1290, 500], [1240, 520], [1230, 440], [1200, 340], [1060, 360], [1050, 280], [1000, 200], [930, 200], [930, 280], [880, 280], [850, 220], [740, 190]],
  [[1020, 390], [1150, 440], [1150, 550], [1110, 530], [1060, 450]],
  [[1160, 560], [1240, 570], [1230, 600], [1170, 590]],
  [[950, 1480], [1050, 1330], [1080, 1180], [1160, 1200], [1110, 1290], [1130, 1400], [1220, 1340], [1240, 1514], [950, 1514]],
  [[1010, 1220], [1100, 1180], [1150, 1240], [1090, 1270], [1015, 1260]],
  [[1180, 1160], [1330, 1180], [1330, 1230], [1200, 1200]],
  [[1360, 1180], [1440, 1160], [1500, 1300], [1450, 1340], [1400, 1290]],
];
const inside = (x: number, y: number, poly: number[][]) => {
  let hit = false;
  for (let i = 0, j = poly.length - 1; i < poly.length; j = i++) {
    const [xi, yi] = poly[i];
    const [xj, yj] = poly[j];
    if (yi > y !== yj > y && x < ((xj - xi) * (y - yi)) / (yj - yi) + xi) hit = !hit;
  }
  return hit;
};
type Dot = { x: number; y: number; rx: number; a: number; green: boolean };
const globeDots: Dot[] = (() => {
  const out: Dot[] = [];
  const R = 676;
  const cx = 680;
  const cy = 670;
  const tilt = (50 * Math.PI) / 180;
  for (let lat = 88; lat > -80; lat -= 2.75) {
    const phi = (lat * Math.PI) / 180;
    const n = Math.max(1, Math.round((2 * Math.PI * Math.cos(phi) * R) / 31));
    for (let k = 0; k < n; k++) {
      const lam = (k / n) * 2 * Math.PI;
      const X = Math.cos(phi) * Math.sin(lam);
      const Y0 = Math.sin(phi);
      const Z0 = Math.cos(phi) * Math.cos(lam);
      const Y = Y0 * Math.sin(tilt) - Z0 * Math.cos(tilt);
      const Z = Y0 * Math.cos(tilt) + Z0 * Math.sin(tilt);
      if (Z < 0.1) continue;
      const x = cx + X * R;
      const y = cy - Y * R;
      const u = (x + 40) * 1.225;
      const v = (y + 30) * 1.668;
      const grey = greyLand.some((p) => inside(u, v, p));
      const green = !grey && greenLand.some((p) => inside(u, v, p));
      if (grey || green) out.push({ x, y, rx: 10.5 * Z, a: (Math.atan2(y - cy, x - cx) * 180) / Math.PI, green });
    }
  }
  return out;
})();

function Globe() {
  return (
    <svg viewBox="0 0 1220 880" className="absolute left-[849px] top-[323px] h-[880px] w-[1220px]">
      {globeDots.map((d, i) => (
        <ellipse key={i} cx={d.x.toFixed(1)} cy={d.y.toFixed(1)} rx={Math.max(2, d.rx).toFixed(1)} ry="10.500" transform={`rotate(${d.a.toFixed(1)} ${d.x.toFixed(1)} ${d.y.toFixed(1)})`} fill={d.green ? "#f9fbf3" : "#f3f5f0"} />
      ))}
    </svg>
  );
}

const LABEL = "flex w-[898px] shrink-0 justify-end text-[24.500px] leading-6 text-[#4474b6]";
const VALUE = "ml-[35px] text-[25px] leading-6 text-[#444] font-['Liberation_Sans',sans-serif]";

function SharePanel() {
  return (
    <Panel className={"relative ml-[71px] h-[1194px] w-[2073px] " + ROBOTO}>
      <Globe />
      <div className="relative">
        <div className="flex h-[53px] items-center border-b-2 border-[#f2f4f5] pl-[14px]">
          <Fit className="mt-[9px] w-[72px] text-[22.500px] font-semibold leading-7 text-[#616b75]">SHARE</Fit>
          <Expand className="ml-auto mr-[19px] mt-[2px] size-[18px] text-[#9a9fa5]" />
        </div>
        <div className="mt-[324px] flex h-[60px] items-center pl-[551px]">
          <Fit className="w-[854px] text-[44.500px] font-semibold leading-[60px] text-[#366cb0]">Deep Learning in Computer Vision - Week 0</Fit>
          <div className="ml-[15px] mt-[2px] flex h-[34px] w-[104px] items-center border-2 border-[#29447e] bg-[#5f78ab] text-white">
            <FaFacebookF className="ml-[6px] mt-2 size-[22px]" />
            <div className="ml-[3px] h-full w-px bg-[#8194bd]" />
            <span className="ml-[9px] font-['Open_Sans',sans-serif] text-[18px] font-bold tracking-[-0.800px]">Share</span>
          </div>
        </div>
        <div className="ml-[703px] mt-[46px] h-[2px] w-[912px] bg-[#e8ede8]" />
        <div className="flex h-[88px]">
          <div className={LABEL + " mt-[41px]"}><Fit className="w-[109px]">Organizer:</Fit></div>
          <Fit className="ml-[35px] mt-[21px] w-[209px] text-[42.500px] leading-[42px] text-[#505050]">Ha Nguyen</Fit>
          <svg viewBox="0 0 28 24" className="ml-[23px] mt-[30px] h-6 w-7"><rect x="1" y="1" width="26" height="20" fill="#e6f1ef" stroke="#b9cbc8" strokeWidth="2" /><path d="M5 16v-3l2-3V6h4v4l1 3v3z" fill="#39434e" /><circle cx="19" cy="11" r="5.500" fill="#c6d9df" /><path d="M0 22.500h28" stroke="#b8b8b8" strokeWidth="3" strokeDasharray="7 3" /></svg>
        </div>
        <div className="ml-[703px] h-[2px] w-[912px] bg-[#e8ede8]" />
        <div className="flex h-[106px]">
          <div className={LABEL + " mt-[49px]"}><Fit className="w-[111px]">Start date:</Fit></div>
          <Fit className="ml-[35px] mt-[29px] w-[632px] text-[42.500px] leading-[42px] text-[#505050]">Saturday, April 14, 2018 11:00 AM</Fit>
          <svg viewBox="0 0 24 30" className="ml-[22px] mt-[36px] h-[30px] w-6"><rect x="1" y="2" width="22" height="26" fill="#fff" stroke="#9a9a9a" strokeWidth="2" /><rect x="2" y="1" width="20" height="9" fill="#2b6fd0" /><text x="5" y="22" fontSize="12" fontWeight="700" fill="#444">14</text><path d="M1 28.500h22" stroke="#888" strokeWidth="3" /></svg>
        </div>
        <div className="ml-[703px] h-[2px] w-[912px] bg-[#e8ede8]" />
        <div className="flex h-[54px]">
          <div className={LABEL + " mt-[37px]"}><Fit className="w-[122px]">Webinar ID:</Fit></div>
          <Fit className={VALUE + " mt-[37px] w-[136px]"}>389-582-963</Fit>
        </div>
        <div className="flex h-[54px]">
          <div className={LABEL + " mt-[37px]"}><Fit className="w-[156px]">Phone access:</Fit></div>
          <Fit className={VALUE + " mt-[36px] w-[261px]"}>Tokyo +81 (3) 4570-43...</Fit>
          <div className="ml-[29px] mt-[34px] flex size-8 items-center justify-center rounded-[4px] border-2 border-[#ccc] bg-[#eef6fa]"><span className="flex size-[25px] items-center justify-center rounded-[9px] bg-[#27aef0] text-[21px] font-bold leading-none text-white">S</span></div>
        </div>
        <div className="flex h-[34px]">
          <Fit className="ml-[933px] mt-[20px] w-[192px] text-[21px] leading-6 text-[#7095d6] underline underline-offset-[3px]">Show more numbers</Fit>
        </div>
        <div className="flex h-[54px]">
          <div className={LABEL + " mt-[36px]"}><Fit className="w-[187px]">Audio access pin:</Fit></div>
          <Fit className={VALUE + " mt-[35px] w-[95px]"}>918712#</Fit>
        </div>
        <div className="flex h-[54px]">
          <div className={LABEL + " mt-[34px]"}><Fit className="w-[118px]">Room URL:</Fit></div>
          <Fit className={VALUE + " mt-[36px] w-[480px]"}>http://cn7inc.clickmeeting.com/deep-learnin...</Fit>
          <svg viewBox="0 0 30 32" className="ml-[35px] mt-[30px] h-8 w-[30px]"><rect x="2" y="3" width="23" height="28" rx="2" fill="#f4f6f4" stroke="#6a4a3f" strokeWidth="2.600" /><rect x="8" y="0" width="11" height="7" rx="2" fill="#aaa" /><path d="M22 18v13M15.500 24.500h13" stroke="#2f9440" strokeWidth="5" /></svg>
          <svg viewBox="0 0 32 32" className="ml-[15px] mt-[30px] size-8"><rect x="1" y="1" width="30" height="30" rx="3" fill="#f1f1f1" stroke="#c4c4c4" strokeWidth="2" /><rect x="4" y="9" width="24" height="16" fill="#e4e4e4" /><path d="M4 9l12 9L28 9M4 25l8-9M28 25l-8-9" fill="none" stroke="#aaa" strokeWidth="1.600" /></svg>
        </div>
        <div className="flex h-[54px]">
          <div className={LABEL + " mt-[34px]"}><Fit className="w-[67px]">Share:</Fit></div>
          <div className="ml-[35px] mt-[30px] flex gap-4 pl-[2px]">
            <div className="flex size-8 items-end justify-end rounded-[3px] border-2 border-[#33477a] bg-[#4c68a2] pr-[1px]"><FaFacebookF className="size-[24px] text-white" /></div>
            <div className="flex size-8 items-center justify-center rounded-[4px] border-2 border-[#55c5f0] bg-[#bdeefa]"><svg viewBox="0 0 28 28" className="size-7"><path d="M10 6v12q0 4 4 4h6M10 11.500h10" fill="none" stroke="#27b5f0" strokeWidth="5.500" strokeLinecap="round" /></svg></div>
            <div className="flex size-8 items-center justify-center rounded-[4px] bg-linear-to-b from-[#1d87ad] to-[#0d5f89] text-[26px] font-black leading-none text-white">in</div>
          </div>
        </div>
      </div>
    </Panel>
  );
}

/* ---------- dock ---------- */

const D = "size-32 shrink-0";

function DockIcons() {
  return (
    <div className="ml-[13px] flex h-full w-[1922px] shrink-0 items-start justify-between pt-[13px]">
      <svg viewBox="0 0 128 128" className={D}>
        <defs><linearGradient id="fb" x2="0" y2="1"><stop stopColor="#2fd0fb" /><stop offset="1" stopColor="#2573ee" /></linearGradient></defs>
        <rect x="11" y="14" width="106" height="100" rx="5" fill="#ebf0f7" />
        <path d="M16 14h50c-6 17-10 36-11 57h16c0 14 1 29 4 43H16a5 5 0 0 1-5-5V19a5 5 0 0 1 5-5z" fill="url(#fb)" />
        <path d="M66 14c-6 17-10 36-11 57h16c0 14 1 29 4 43" fill="none" stroke="#1b3b63" strokeWidth="1.500" />
        <path d="M40 41v9M88 41v9M33 78c14 17 48 17 62 0" fill="none" stroke="#151b25" strokeWidth="4.500" strokeLinecap="round" />
      </svg>
      <svg viewBox="0 0 128 128" className={D}>
        <defs><linearGradient id="lp" x2="0" y2="1"><stop stopColor="#cfd9dc" /><stop offset="1" stopColor="#7d7c7a" /></linearGradient><linearGradient id="lr" x2="0" y2="1"><stop stopColor="#eef8fc" /><stop offset="1" stopColor="#9b9a98" /></linearGradient></defs>
        <circle cx="64" cy="64" r="54.500" fill="url(#lp)" stroke="url(#lr)" strokeWidth="5" />
        <path d="M98 30C78 32 57 45 48 62l-13 2-11 11 16 1-2 8 10 10 9-3 2 16 11-11 1-13C88 72 97 51 98 30z" fill="#3f4447" /><circle cx="77" cy="52" r="7" fill="#b6bcbe" /><path d="M40 87c-7 2-9 8-11 13 6-1 13-4 14-11z" fill="#3f4447" />
      </svg>
      <svg viewBox="0 0 128 128" className={D}>
        <defs><radialGradient id="it"><stop stopColor="#3aa4dc" /><stop offset="1" stopColor="#2773b8" /></radialGradient></defs>
        <circle cx="64" cy="64" r="56" fill="url(#it)" stroke="#fff" strokeWidth="6" />
        <path d="M45 37q0-4 4-5l38-6q3 0 3 4v56c0 8-6 12-13 12-6 0-10-4-10-9s4-10 14-11V46l-28 4v46c0 7-5 11-12 11s-12-3-12-9 4-11 16-12z" fill="#fff" />
      </svg>
      <svg viewBox="0 0 128 128" className={D}>
        <path d="M13 17L98 4l17 105-86 14z" fill="#fbfaf6" stroke="#d5c48a" /><path d="M13 17L98 4l3 18-85 14z" fill="#ffd042" />
        <path d="M18 46l84-13M20 55l84-13M21 64l84-13M23 73l84-13M24 82l84-13M26 91l84-13M27 100l84-13M28 109l84-13" stroke="#b9b9b9" strokeWidth="1.500" />
      </svg>
      <svg viewBox="0 0 128 128" className={D}>
        <defs><linearGradient id="sp" x2="0" y2="1"><stop stopColor="#cfdfe6" /><stop offset="1" stopColor="#757372" /></linearGradient></defs>
        <rect x="8" y="11" width="112" height="105" rx="4" fill="url(#sp)" />
        <circle cx="64" cy="64" r="47" fill="#26282a" />
        <circle cx="64" cy="64" r="37" fill="none" stroke="#a5a5a5" strokeWidth="8" strokeDasharray="4.500 3.248" /><circle cx="64" cy="64" r="31" fill="none" stroke="#acacac" strokeWidth="6" />
        <path d="M64 64h30M64 64L49 38M64 64L49 90" stroke="#b5b5b5" strokeWidth="5" /><circle cx="64" cy="64" r="6" fill="#ccc" />
      </svg>
      <svg viewBox="0 0 128 128" className={D}>
        <circle cx="64" cy="57" r="55" fill="#8ac24a" /><path d="M9 57a55 55 0 0 1 110 0z" fill="#7db343" />
        <path d="M22 118L60 58M106 118L68 58" stroke="#f1f1f1" strokeWidth="10" /><path d="M18 113l8 5-6 7zM110 113l-8 5 6 7z" fill="#f1f1f1" />
        <path d="M104 58c0 22-18 36-40 36-8 0-16-2-22-6" fill="none" stroke="#f1f1f1" strokeWidth="10" />
        <path d="M57 27h14v11l8 4v17L64 71 49 59V42l8-4z" fill="#666" /><circle cx="64" cy="51" r="8" fill="#8ac24a" />
      </svg>
      <svg viewBox="0 0 128 128" className={D}>
        <defs><linearGradient id="xc" x2="0" y2="1"><stop stopColor="#53b7f5" /><stop offset="1" stopColor="#1977ee" /></linearGradient><linearGradient id="hm" x2="0" y2="1"><stop stopColor="#f2f4f5" /><stop offset="1" stopColor="#7d858a" /></linearGradient></defs>
        <path d="M2 32l93-12 26 81-105 18z" fill="url(#xc)" /><path d="M8 37l82-11 25 71-93 16z" fill="none" stroke="#a9d8fb" />
        <path d="M54 33L30 103l8-5 20-57zM58 33l44 66 6 6-12-3-40-60zM22 80l72-12M24 89l72-12" fill="none" stroke="#cdeafd" strokeWidth="1.500" />
        <path d="M104 16l4 1-15 44-6-1z" fill="#dfe3e5" /><path d="M90 58L74 116" stroke="#17181a" strokeWidth="11" strokeLinecap="round" />
        <path d="M70 12Q82 2 102 5l10 8 10-3 4 14-9 5-9-8-10 3-10-8q-10-4-18-4z" fill="url(#hm)" stroke="#6b7277" strokeWidth="1" />
      </svg>
      <svg viewBox="0 0 128 128" className={D}>
        <path d="M64 7l35 4 27 36-62 74L2 47l25-36z" fill="#fdb02a" /><path d="M2 47h25l37 74z" fill="#ee7421" /><path d="M126 47h-25l-37 74z" fill="#f0701f" /><path d="M64 7L27 47h74z" fill="#fee69a" /><path d="M27 11L2 47h25z" fill="#fba81f" /><path d="M99 11l27 36h-25z" fill="#fdc02c" /><path d="M64 7L27 11v36zM64 7l35 4 2 36z" fill="#fecf3a" />
      </svg>
      <svg viewBox="0 0 128 128" className={D}>
        <defs>
          <linearGradient id="vb" x2="0" y2="1"><stop stopColor="#3d96dd" /><stop offset="1" stopColor="#1560a5" /></linearGradient>
          <linearGradient id="vr" x2="0" y2="1"><stop stopColor="#fb5558" /><stop offset="1" stopColor="#c91d22" /></linearGradient>
        </defs>
        <path d="M38 52v62q0 8 8 8h68q8 0 8-8V45q0-8-8-8H52l10 21h40v44H58V96z" fill="url(#vr)" />
        <path d="M13 5h68q8 0 8 8v63L70 50V26H25v43h30l20 21H13q-8 0-8-8V13q0-8 8-8z" fill="url(#vb)" />
        <path d="M52 37h62q8 0 8 8v13H62z" fill="#f95255" /><path d="M38 52l14 17H38z" fill="#f4494d" />
      </svg>
      <svg viewBox="0 0 128 128" className={D}>
        <defs><linearGradient id="at" x2="0" y2="1"><stop stopColor="#aadc93" /><stop offset="1" stopColor="#18a572" /></linearGradient></defs>
        <circle cx="64" cy="64" r="54" fill="url(#at)" stroke="#ededed" strokeWidth="5" />
        <g fill="none" stroke="#eefaf0" strokeWidth="3"><ellipse cx="64" cy="64" rx="36" ry="13" transform="rotate(12 64 64)" /><ellipse cx="64" cy="64" rx="36" ry="13" transform="rotate(72 64 64)" /><ellipse cx="64" cy="64" rx="36" ry="13" transform="rotate(-48 64 64)" /></g><circle cx="64" cy="64" r="4" fill="#fff" />
      </svg>
      <svg viewBox="0 0 128 128" className={D}>
        <circle cx="64" cy="64" r="59" fill="#25a25f" /><path d="M13 34A59 59 0 0 1 117 37H64L40 78z" fill="#db4c41" /><path d="M117 37A59 59 0 0 1 63 123L88 76 64 37z" fill="#ffcd4c" /><circle cx="64" cy="64" r="27" fill="#f4f4f4" /><circle cx="64" cy="64" r="21.500" fill="#4e8df5" />
      </svg>
      <svg viewBox="0 0 128 128" className={D}>
        <defs><linearGradient id="st" x2="0" y2="1"><stop stopColor="#1065ff" /><stop offset="1" stopColor="#0d52cc" /></linearGradient></defs>
        <circle cx="64" cy="64" r="57" fill="url(#st)" /><circle cx="64" cy="59" r="16" fill="none" stroke="#fff" strokeWidth="16" /><path d="M64 70v27" stroke="#fff" strokeWidth="16" /><circle cx="64" cy="59" r="8" fill="#0e57e8" />
      </svg>
      <svg viewBox="0 0 128 128" className={D}>
        <path d="M9 18L95 4l17 104-85 14z" fill="#2d2a2e" /><path d="M85 14l23 5 11 73-18 13z" fill="#a26fe0" /><path d="M28 92l71-1 2 14z" fill="#7c4bc0" />
        <path d="M31 50l41 31 5-4-5-44-5-1-33 51-5-2z" fill="none" stroke="#8f63d0" strokeWidth="7" />
      </svg>
      <svg viewBox="0 0 128 128" className={D}>
        <circle cx="64" cy="64" r="59" fill="#20b8ec" /><circle cx="35" cy="35" r="34" fill="#20b8ec" /><circle cx="93" cy="93" r="34" fill="#20b8ec" />
        <path d="M88 45C84 33 72 32 64 32c-13 0-21 6-21 15 0 22 43 11 43 34 0 10-9 15-22 15-9 0-19-3-23-14" fill="none" stroke="#fff" strokeWidth="14" strokeLinecap="round" />
      </svg>
    </div>
  );
}

function Dock() {
  return (
    <div className="relative flex h-[162px] w-[2148px] rounded-t-[10px] bg-[radial-gradient(ellipse_900px_200px_at_1080px_170px,rgba(120,184,212,0.750),transparent),radial-gradient(ellipse_500px_180px_at_60px_170px,rgba(160,203,224,0.800),transparent),linear-gradient(100deg,#93abb9_0%,#98aab6_12%,#5f8c9c_26%,#447a8e_38%,#4f8597_50%,#4a8295_65%,#3d7688_78%,#3f8296_88%,#3f8ba1_100%)]">
      <DockIcons />
      <div className="ml-[38px] mt-[22px] h-[118px] w-[2px] shrink-0 bg-[#225e72]" />
      <svg viewBox="0 0 96 124" className="ml-[48px] mt-[13px] h-[124px] w-24 shrink-0">
        <defs><linearGradient id="tr"><stop stopColor="#c9cccd" /><stop offset=".3" stopColor="#eceded" /><stop offset=".7" stopColor="#e2e3e3" /><stop offset="1" stopColor="#b7bcbe" /></linearGradient></defs>
        <path d="M6 22L16 8l10 6L34 1l10 12L56 2l8 12 14-5 10 14-8 10H16z" fill="#ececec" stroke="#8a8f92" /><path d="M20 16l8 14M60 10l6 18M74 16l-8 12" stroke="#7c3c30" strokeWidth="4" /><circle cx="38" cy="16" r="6" fill="#36b3d6" /><path d="M28 20l12 12M50 12l-4 18M80 16l-6 12" stroke="#333" strokeWidth="3" />
        <path d="M2 18q2 12 46 12 44 0 46-12L84 112q-1 9-14 9H26q-12 0-14-9z" fill="url(#tr)" opacity=".95" /><path d="M20 44l10 66M70 40l-4 70M34 46q14 18 30-4" stroke="#cfd2d3" strokeWidth="2" fill="none" />
      </svg>
      <span className="absolute bottom-[4px] left-[72px] size-2 rounded-full bg-[#0c3347]" />
      <span className="absolute bottom-[4px] left-[1452px] size-2 rounded-full bg-[#0c3347]" />
      <span className="absolute bottom-[4px] left-[1866px] size-2 rounded-full bg-[#06202c]" />
    </div>
  );
}

export default function App() {
  return (
    <div className="flex h-[1800px] w-[2880px] flex-col overflow-hidden bg-[linear-gradient(90deg,#9aa7af_0%,#6d7f89_20%,#0d4552_60%,#0a3946_100%)]">
      <MenuBar />
      <main className="relative mt-[2px] flex h-[1592px] shrink-0 flex-col overflow-hidden rounded-[10px] bg-[#f9fafc]">
        <TabStrip />
        <Toolbar />
        <BookmarksBar />
        <RoomHeader />
        <TrialBanner />
        <div className="flex pl-[20px] pt-[25px]">
          <div className="w-[696px] shrink-0">
            <CameraPanel />
            <AttendeePanel />
            <ChatPanel />
          </div>
          <SharePanel />
        </div>
        <div className={"flex pl-[38px] pt-[4px] text-[22px] leading-7 text-white " + VERDANA}>
          <Fit className="w-[115px]">Powered by</Fit>
          <Fit className="ml-2 w-[176px] text-[#64f03e]">ClickMeeting.com</Fit>
          <Fit className="ml-2 w-[248px] text-white">- Host your own webinar</Fit>
        </div>
        <div className="absolute bottom-0 left-[300px] h-[80px] w-[2270px] bg-linear-to-b from-transparent to-[#5a6068]/13 [mask-image:linear-gradient(to_right,transparent,black_120px,black_calc(100%-120px),transparent)]" />
      </main>
      <div className="flex bg-[#4a5e68]">
        <div className="h-[162px] w-[366px] shrink-0 bg-[linear-gradient(160deg,#6f8794_0%,#62727b_25%,#7c96a3_50%,#7594a3_68%,#a9bcc6_80%,#7796a6_92%)] shadow-[inset_-60px_40px_50px_-20px_rgba(50,60,66,0.550)]" />
        <Dock />
        <div className="h-[162px] w-[366px] bg-[linear-gradient(100deg,#04333d_0%,#17454f_40%,#0c4350_60%,#042430_85%,#063542_100%)]" />
      </div>
    </div>
  );
}
